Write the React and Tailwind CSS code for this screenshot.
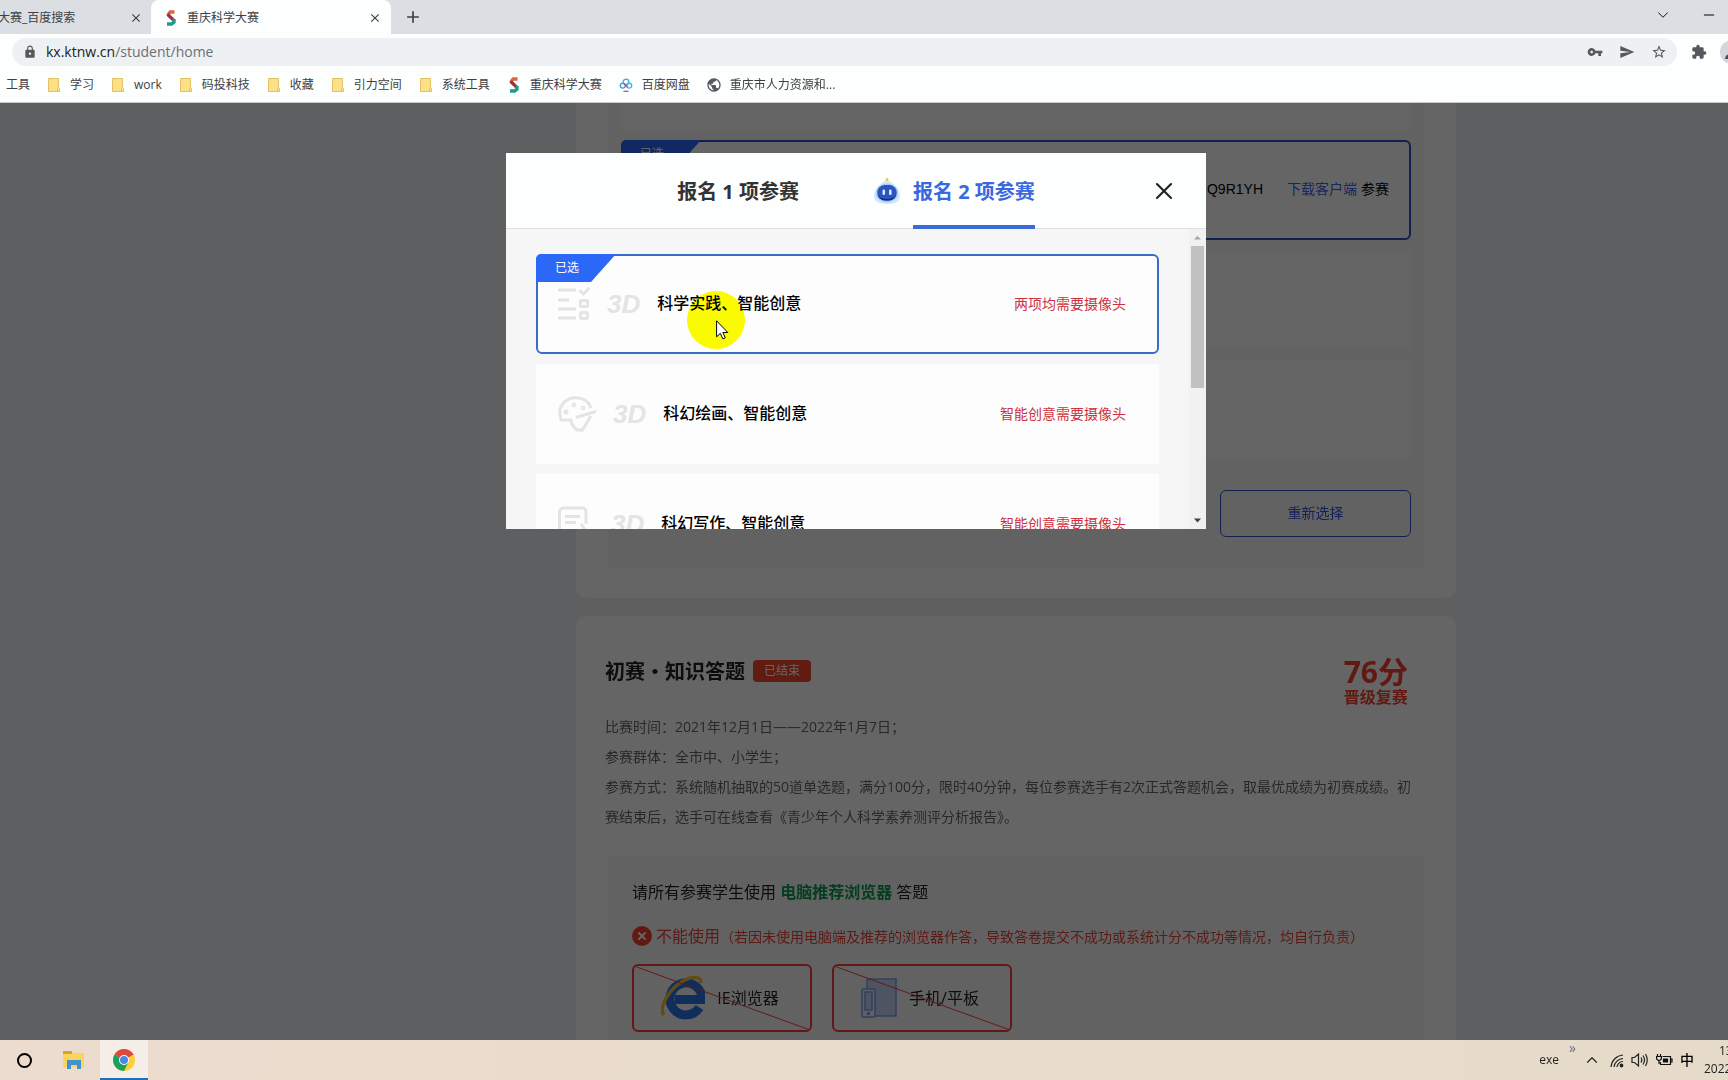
import React, { useState } from "react";
import { MdAdd, MdClose, MdExtension, MdLock, MdPublic, MdSend, MdStarBorder, MdVpnKey } from "react-icons/md";
import { ChevronDown, ChevronUp, Minus, X } from "lucide-react";

const BOOKMARKS = [
    { icon: "folder", label: "学习" },
    { icon: "folder", label: "work" },
    { icon: "folder", label: "码投科技" },
    { icon: "folder", label: "收藏" },
    { icon: "folder", label: "引力空间" },
    { icon: "folder", label: "系统工具" },
    { icon: "contest", label: "重庆科学大赛" },
    { icon: "cloud", label: "百度网盘" },
    { icon: "globe", label: "重庆市人力资源和..." },
];

const OPTIONS = [
    { id: "practice", icon: "list", title: "科学实践、智能创意", note: "两项均需要摄像头" },
    { id: "painting", icon: "palette", title: "科幻绘画、智能创意", note: "智能创意需要摄像头" },
    { id: "writing", icon: "note", title: "科幻写作、智能创意", note: "智能创意需要摄像头" },
];

function ContestLogo() {
    return (
        <svg width="16" height="16" viewBox="0 0 16 16" fill="none" strokeWidth="3.4">
            <path d="M11.5 2H7.2L4.6 5.2" stroke="#e2653a" />
            <path d="M4.6 4.4L10.8 10.4" stroke="#9c2f45" />
            <path d="M11 9v3.2L8.6 14H4" stroke="#1f9c85" />
        </svg>
    );
}

function CloudLogo() {
    return (
        <svg width="16" height="16" viewBox="0 0 16 16" fill="none" strokeWidth="1.3">
            <circle cx="8" cy="5" r="2.8" stroke="#3fa9e0" />
            <circle cx="4.8" cy="8.6" r="2.5" stroke="#2f9fdc" />
            <circle cx="11.2" cy="8.6" r="2.5" stroke="#35b8e6" />
            <path d="M6.4 7l3.2 3" stroke="#d8405f" />
            <path d="M5.5 14.3h5" stroke="#b05a86" />
        </svg>
    );
}

function FolderIcon() {
    return (
        <svg width="16" height="16" viewBox="0 0 16 16">
            <path d="M2.5 1.5h10v9l1 1v3h-11z" fill="#fbe08a" stroke="#e3c263" />
            <path d="M11.5 10.5v3.5" stroke="#e3c263" />
        </svg>
    );
}

function BookmarkIcon({ name }) {
    if (name === "folder") return <FolderIcon />;
    if (name === "contest") return <ContestLogo />;
    if (name === "cloud") return <CloudLogo />;
    return <MdPublic size={16} className="text-[#55585c]" />;
}

function BrowserChrome() {
    return (
        <header className="shrink-0 bg-[#fdfefe] text-xs text-[#3c4043] border-b border-[#c9cbcd]">
            <div className="flex h-[34px] bg-[#dbdfe3]">
                <div className="flex w-[151px] items-center justify-between pr-2 pt-px">
                    <span className="-ml-[2px] whitespace-nowrap">大赛_百度搜索</span>
                    <button aria-label="关闭标签页"><MdClose size={14} className="stroke-current" /></button>
                </div>
                <div className="flex w-[240px] items-center rounded-t-lg bg-[#fdfefe] pl-3 pr-[9px] pt-px">
                    <ContestLogo />
                    <span className="ml-2 flex-1">重庆科学大赛</span>
                    <button aria-label="关闭标签页"><MdClose size={14} className="stroke-current" /></button>
                </div>
                <button aria-label="新标签页" className="ml-3"><MdAdd size={20} /></button>
                <div className="ml-auto flex items-center gap-[29px] pb-1 pr-[11px] text-black">
                    <button aria-label="搜索标签页"><ChevronDown size={18} strokeWidth={1.2} /></button>
                    <button aria-label="最小化"><Minus size={16} strokeWidth={1.6} /></button>
                </div>
            </div>

            <div className="flex h-8 items-end overflow-hidden pl-3">
                <div className="flex h-7 flex-1 items-center rounded-full bg-[#eef1f3] pl-[11px] pr-[10px] text-[#55585c]">
                    <MdLock size={14} className="mr-[9px]" />
                    <a href="#home" className="text-sm text-[#6b6f73]">
                        <span className="text-[#222]">kx.ktnw.cn</span>/student/home
                    </a>
                    <div className="ml-auto flex gap-4">
                        <button aria-label="密码"><MdVpnKey size={16} /></button>
                        <button aria-label="发送"><MdSend size={16} /></button>
                        <button aria-label="收藏"><MdStarBorder size={16} /></button>
                    </div>
                </div>
                <button aria-label="扩展程序" className="ml-[14px] mb-[6px] text-[#55585c]"><MdExtension size={16} /></button>
                <div className="ml-[13px] mb-[2px] h-6 w-2 overflow-hidden">
                    <div className="flex h-6 w-6 items-end overflow-hidden rounded-full bg-[#d3d6da] pb-[5px] pl-[5px]">
                        <div className="h-[5px] w-[14px] rounded-t-full bg-[#4a4d51]" />
                    </div>
                </div>
            </div>

            <nav className="flex h-9 items-center gap-4 pl-[6px] pt-[2px]">
                <a href="#tools">工具</a>
                {BOOKMARKS.map((b) => (
                    <a key={b.label} href="#bookmark" className="flex items-center gap-2 whitespace-nowrap">
                        <BookmarkIcon name={b.icon} />
                        {b.label}
                    </a>
                ))}
            </nav>
        </header>
    );
}

function Ribbon() {
    return (
        <span className="absolute -left-[2px] -top-[2px] flex h-7 w-20 items-center rounded-tl-[5px] bg-[#2b68f8] pl-[19px] text-xs text-white [clip-path:polygon(0_0,100%_0,55px_100%,0_100%)]">
            已选
        </span>
    );
}

function OptionIcon({ name }) {
    if (name === "list") {
        return (
            <svg width="32" height="34" viewBox="0 0 32 34" fill="none" stroke="#e4e4e4" strokeWidth="3">
                <path d="M0 3h18M0 13h11M0 22h18M0 31h18" />
                <path d="M21.5 3l4 4 6-6" />
                <rect x="22.5" y="13.5" width="7" height="6" rx="1" />
                <rect x="22.5" y="25.5" width="7" height="6" rx="1" />
            </svg>
        );
    }
    if (name === "palette") {
        return (
            <svg width="38" height="36" viewBox="0 0 38 36" fill="none" stroke="#e4e4e4" strokeWidth="3">
                <path d="M33 12C30.5 5 24.5 1.8 17.5 1.8 8.5 1.8 1.8 8.5 1.8 16.5c0 2.7.6 5 1.5 7.5h9.500l1.500 5 4.500 5h5.500l4.500-7 4-7" />
                <path d="M18 21.5L38 15.5" />
                <circle cx="8" cy="16" r="1" />
                <circle cx="16" cy="9" r=".8" />
                <circle cx="25" cy="12" r=".8" />
            </svg>
        );
    }
    return (
        <svg width="36" height="36" viewBox="0 0 36 36" fill="none" stroke="#e4e4e4" strokeWidth="3">
            <path d="M28 18V6c0-2.5-1.7-4-4-4H6C3.5 2 1.5 3.5 1.5 6v24c0 2.5 2 4 4.5 4h10" />
            <path d="M7 10.5h15M7 16.5h11" />
            <path d="M23 18l10 14" />
        </svg>
    );
}

function OptionCard({ option, selected, onSelect }) {
    return (
        <button
            onClick={() => onSelect(option.id)}
            aria-pressed={selected}
            className={`relative flex h-[100px] w-full shrink-0 items-center gap-[17px] border-2 bg-[#fdfdfd] pl-5 pr-[31px] text-left ${
                selected ? "rounded-md border-[#3a6bc9]" : "border-[#fdfdfd]"
            }`}
        >
            {selected && <Ribbon />}
            <OptionIcon name={option.icon} />
            <span className="font-['Liberation_Sans',sans-serif] text-[26px] font-bold italic leading-8 text-[#e4e4e4]">3D</span>
            <span className="pb-[2px] text-base font-medium text-black">{option.title}</span>
            <span className="ml-auto text-sm text-[#cc3340]">{option.note}</span>
        </button>
    );
}

function RobotIcon() {
    return (
        <svg width="28" height="28" viewBox="0 0 28 28">
            <path d="M14 3C7 6 1 13 1 19c0 5 4 8 13 8s13-3 13-8C27 13 21 6 14 3z" fill="#d3e6fc" />
            <ellipse cx="14" cy="16" rx="11" ry="9.5" fill="#a9cbf5" />
            <rect x="4.3" y="8" width="19.4" height="15.5" rx="7.5" fill="#2a55c0" />
            <path d="M4.8 17.5c1 6 17.4 6 18.4 0-1 8-17.4 8-18.4 0z" fill="#142c78" />
            <rect x="9.5" y="12.5" width="2.6" height="5.5" rx="1.3" fill="#d6eaff" />
            <rect x="16" y="12.5" width="2.6" height="5.5" rx="1.3" fill="#d6eaff" />
            <circle cx="14" cy="2.5" r="1.5" fill="#e8c84a" />
        </svg>
    );
}

function ScrollBar() {
    return (
        <div className="flex w-[17px] flex-col items-center bg-[#f1f1f1]">
            <svg width="17" height="17" viewBox="0 0 17 17"><path d="M5 10.5L8.5 7l3.5 3.5z" fill="#a3a3a3" /></svg>
            <div className="h-[142px] w-[13px] bg-[#c1c1c1]" />
            <svg className="mt-auto" width="17" height="17" viewBox="0 0 17 17"><path d="M5 6.5L8.5 10.5 12 6.5z" fill="#404040" /></svg>
        </div>
    );
}

function SignupModal() {
    const [selected, setSelected] = useState("practice");

    return (
        <div className="absolute inset-0 flex items-start justify-center bg-black/60 pr-4 pt-[50px]">
            <div role="dialog" className="relative w-[700px] bg-[#fdfefe]">
                <div className="relative flex h-[76px] justify-center gap-[114px] border-b border-[#e0e0e0] text-xl font-bold">
                    <button className="pt-[2px] text-[#333]">报名 1 项参赛</button>
                    <button className="relative -mb-px border-b-4 border-[#3a6bd6] pt-[6px] text-[#3a68e0]">
                        <span className="absolute -left-10 top-6"><RobotIcon /></span>
                        报名 2 项参赛
                    </button>
                    <button aria-label="关闭" className="absolute right-7 top-6 text-[#222]">
                        <X size={28} strokeWidth={1.8} />
                    </button>
                </div>
                <div className="flex max-h-[300px] overflow-hidden bg-[#f6f6f6]">
                    <div className="flex flex-1 flex-col gap-[10px] px-[30px] pt-[25px]">
                        {OPTIONS.map((o) => (
                            <OptionCard key={o.id} option={o} selected={o.id === selected} onSelect={setSelected} />
                        ))}
                    </div>
                    <ScrollBar />
                </div>

                {/* click highlight and mouse pointer */}
                <div className="pointer-events-none absolute left-[181px] top-[138px] h-[58px] w-[58px] rounded-full bg-[#fcfc00] mix-blend-multiply" />
                <svg className="pointer-events-none absolute left-[210px] top-[167px]" width="13" height="20" viewBox="0 0 13 20">
                    <path d="M.6.8v16l3.7-3.4 2.6 5.5 2.4-1.1-2.5-5.3h5z" fill="#fff" stroke="#000" strokeWidth="1" />
                </svg>
            </div>
        </div>
    );
}

function IeIcon() {
    return (
        <svg width="44" height="44" viewBox="0 0 44 44" fill="none">
            <path d="M38.5 31.5A16 16 0 1 1 41 23.5H14" stroke="#2a74e4" strokeWidth="9" />
            <path d="M3 39C-3 32 8 13 22 5 31 0 40 0 40 7" stroke="#f4bd2e" strokeWidth="3.5" />
        </svg>
    );
}

function DevicesIcon() {
    return (
        <svg width="36" height="40" viewBox="0 0 36 40" stroke="#7d9fe6" strokeWidth="1.5">
            <rect x="6" y="1" width="29" height="37" fill="#c4d4f4" />
            <rect x="1" y="11" width="13" height="28" rx="1" fill="#e8effc" />
            <rect x="4" y="14" width="7" height="18" fill="#c4d4f4" />
            <circle cx="7.5" cy="35.5" r="1" />
        </svg>
    );
}

function BlockedBox({ icon, label }) {
    return (
        <div className="relative flex h-[68px] w-[180px] items-center justify-center gap-3 rounded-md border-2 border-[#f0403c] pr-1 text-base text-[#222]">
            {icon}
            {label}
            <svg className="absolute inset-0 h-full w-full" viewBox="0 0 100 100" preserveAspectRatio="none">
                <path d="M0 0L100 100" stroke="#f0403c" strokeWidth="1" vectorEffect="non-scaling-stroke" />
            </svg>
        </div>
    );
}

function HomePage() {
    return (
        <div className="flex flex-col items-center gap-[18px] pl-[304px]">
            <section className="w-[880px] rounded-b-[10px] bg-[#fcfcfc] px-8 pb-[30px]">
                <div className="flex flex-col gap-[10px] bg-[#f6f6f6] px-[13px] pb-[31px]">
                    <div className="h-[27px] bg-[#fafafa]" />
                    <div className="relative flex h-[100px] items-center justify-end rounded-md border-2 border-[#2b50c8] bg-[#fcfcfc] pb-[2px] pr-5 text-sm text-black">
                        <Ribbon />
                        <span className="mr-6 font-['Liberation_Sans',sans-serif]">Q9R1YH</span>
                        <a href="#download" className="mr-1 text-[#3a5cf0]">下载客户端</a>
                        参赛
                    </div>
                    <div className="h-[100px] bg-[#fafafa]" />
                    <div className="h-[100px] bg-[#fafafa]" />
                    <button className="mt-5 h-[47px] w-[191px] self-end rounded-md border border-[#2b50c8] pb-[2px] text-sm text-[#3454d8]">
                        重新选择
                    </button>
                </div>
            </section>

            <section className="w-[880px] rounded-t-[10px] bg-[#fcfcfc] pt-10">
                <div className="flex h-12 items-start justify-between pl-[29px] pr-12">
                    <div className="flex items-center gap-2">
                        <h2 className="text-xl font-bold leading-8 text-[#222]">初赛・知识答题</h2>
                        <span className="mb-[2px] h-[22px] w-[58px] rounded bg-[#f0472c] text-center text-xs leading-[22px] text-white">已结束</span>
                    </div>
                    <div className="text-center font-bold text-[#f5402c]">
                        <div className="text-3xl leading-8">76分</div>
                        <div className="text-base leading-[18px]">晋级复赛</div>
                    </div>
                </div>
                <div className="mt-2 whitespace-nowrap pl-[29px] text-sm leading-[30px] text-[#666]">
                    <p>比赛时间：2021年12月1日——2022年1月7日；</p>
                    <p>参赛群体：全市中、小学生；</p>
                    <p>
                        参赛方式：系统随机抽取的50道单选题，满分100分，限时40分钟，每位参赛选手有2次正式答题机会，取最优成绩为初赛成绩。初
                        <br />
                        赛结束后，选手可在线查看《青少年个人科学素养测评分析报告》。
                    </p>
                </div>
                <div className="mx-8 mt-6 bg-[#f6f6f6] px-6 py-6">
                    <p className="text-base leading-6 text-[#222]">
                        请所有参赛学生使用 <b className="text-[#0c9a4e]">电脑推荐浏览器</b> 答题
                    </p>
                    <p className="mt-5 flex items-center whitespace-nowrap leading-6 text-[#e8443c]">
                        <span className="mr-1 flex h-5 w-5 items-center justify-center rounded-full bg-[#f5402c] text-white">
                            <X size={12} strokeWidth={4} />
                        </span>
                        不能使用
                        <span className="pt-[2px] text-sm">（若因未使用电脑端及推荐的浏览器作答，导致答卷提交不成功或系统计分不成功等情况，均自行负责）</span>
                    </p>
                    <div className="mt-4 flex gap-5">
                        <BlockedBox icon={<IeIcon />} label="IE浏览器" />
                        <BlockedBox icon={<DevicesIcon />} label="手机/平板" />
                    </div>
                </div>
            </section>
        </div>
    );
}

function ExplorerIcon() {
    return (
        <svg width="22" height="20" viewBox="0 0 22 20">
            <path d="M0 1h9l1 2h11v14H0z" fill="#fbd45c" />
            <path d="M0 1h9v3H0z" fill="#d9a520" />
            <path d="M4 10h14v9h-4v-4H8v4H4z" fill="#3f93cf" />
        </svg>
    );
}

function ChromeIcon() {
    return (
        <svg width="22" height="22" viewBox="0 0 22 22">
            <circle cx="11" cy="11" r="11" fill="#fdd03b" />
            <path d="M11 11L1.5 5.5A11 11 0 0 1 20.5 5.5z" fill="#db4a3c" />
            <path d="M11 11L1.5 5.5A11 11 0 0 0 11 22l4-8z" fill="#1da05a" />
            <path d="M11 6h9.8A11 11 0 0 0 20.5 5.5L11 5z" fill="#db4a3c" />
            <circle cx="11" cy="11" r="5" fill="#fff" />
            <circle cx="11" cy="11" r="4" fill="#4a86e8" />
        </svg>
    );
}

function TaskBar() {
    return (
        <footer className="flex h-10 shrink-0 items-center overflow-hidden bg-linear-to-r from-[#ecdccf] to-[#e6dbc8] text-xs text-[#222]">
            <button aria-label="Cortana" className="flex h-10 w-12 items-center justify-center">
                <span className="h-[15px] w-[15px] rounded-full border-2 border-black" />
            </button>
            <button aria-label="文件资源管理器" className="flex h-10 w-[52px] items-center justify-center"><ExplorerIcon /></button>
            <button aria-label="Chrome" className="flex h-10 w-12 items-center justify-center border-b-2 border-[#1a72bd] bg-[#f6eee8] pt-[2px]">
                <ChromeIcon />
            </button>
            <div className="ml-auto flex items-center">
                <span>exe</span>
                <span className="mb-5 ml-[10px] h-4 w-[14px] text-sm leading-3 text-[#6a6a90]">»</span>
                <button aria-label="显示隐藏的图标"><ChevronUp size={18} strokeWidth={1.5} /></button>
                <svg className="ml-2" width="16" height="16" viewBox="0 0 16 16" fill="none" stroke="#222" strokeWidth="1.2">
                    <path d="M2 15A13 13 0 0 1 14 3M5 15a9.5 9.5 0 0 1 9-8.5M8 15a6 6 0 0 1 6-5.5" />
                    <circle cx="12.5" cy="13.5" r="1.3" fill="#222" />
                </svg>
                <svg className="ml-[6px]" width="18" height="16" viewBox="0 0 18 16" fill="none" stroke="#222" strokeWidth="1.2">
                    <path d="M1 5.5h2.5L7.5 2v12L3.5 10.5H1zM10 5.5q1.5 2.5 0 5M12 3.5q3 4.5 0 9M14.5 2q3.5 6 0 12" />
                </svg>
                <svg className="ml-[7px]" width="17" height="14" viewBox="0 0 17 14" fill="none" stroke="#111" strokeWidth="1.2">
                    <path d="M6.5 3.5h8v8H4.5V9M14.5 6H16v3h-1.5M1.5 1v2.5M4.5 1v2.5M.6 3.5h4.8V6L3 8 .6 6zM3 8v3" />
                    <path d="M7.5 6h4v3h-4z" fill="#111" />
                </svg>
                <button className="ml-[7px] text-sm font-medium text-black">中</button>
                <div className="ml-[10px] w-6 overflow-hidden leading-[18px]">
                    <div className="pl-[15px]">13</div>
                    <div>2022</div>
                </div>
            </div>
        </footer>
    );
}

export default function App() {
    return (
        <div className="flex h-screen flex-col overflow-hidden font-['Open_Sans','Noto_Sans_CJK_SC',sans-serif]">
            <BrowserChrome />
            <main className="relative min-h-0 flex-1 overflow-hidden bg-[#eaeef2]">
                <HomePage />
                <SignupModal />
            </main>
            <TaskBar />
        </div>
    );
}
